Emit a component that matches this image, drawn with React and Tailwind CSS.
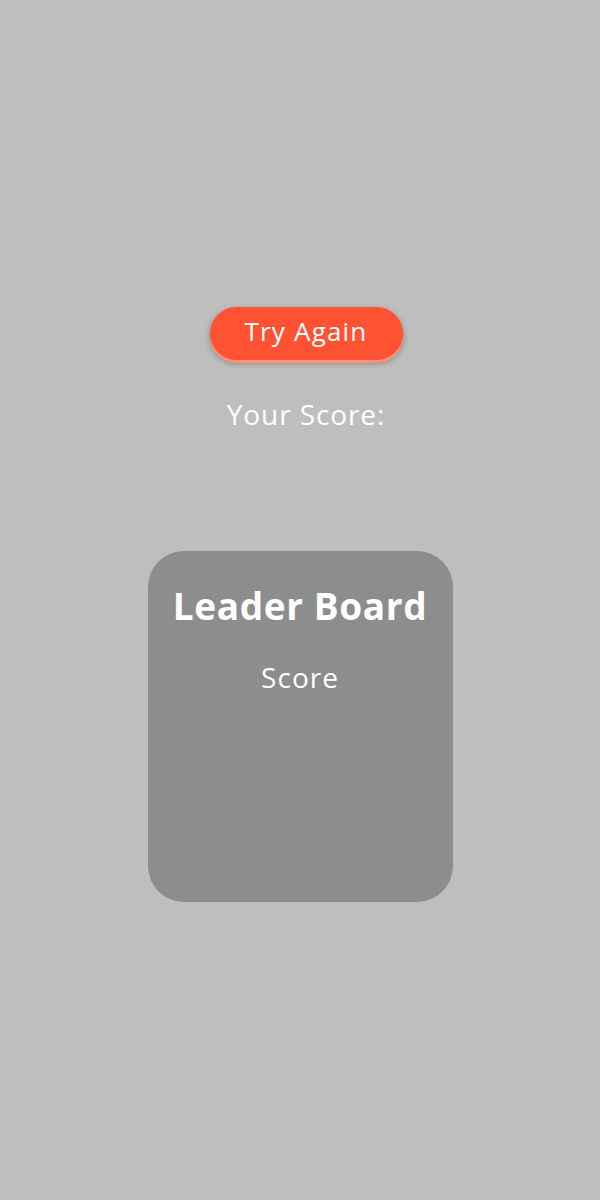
export default function App() {
  return (
    <div className="min-h-screen w-full bg-[#bebebe] flex flex-col items-center pt-[307px] font-['Open_Sans',sans-serif] text-white">
      {/* try again */}
      <button className="ml-[12px] w-[193px] h-[53px] pb-[6px] rounded-full bg-[#ff5232] text-[26px] leading-none tracking-[1.2px] shadow-[0_3px_0_#ff9079,0_3px_6px_rgba(0,0,0,0.35)]">
        Try Again
      </button>
      <div className="ml-[12px] mt-[38px] text-[28px] leading-[32px] tracking-[0.9px]">Your Score:</div>

      {/* leader board */}
      <div className="mt-[121px] w-[305px] h-[351px] rounded-[36px] bg-[#8d8d8d] flex flex-col items-center pt-[32px]">
        <div className="text-[37px] font-bold leading-[46px] tracking-[0.6px]">Leader Board</div>
        <div className="mt-[32px] text-[28px] leading-[32px] tracking-[1px]">Score</div>
      </div>
    </div>
  );
}
